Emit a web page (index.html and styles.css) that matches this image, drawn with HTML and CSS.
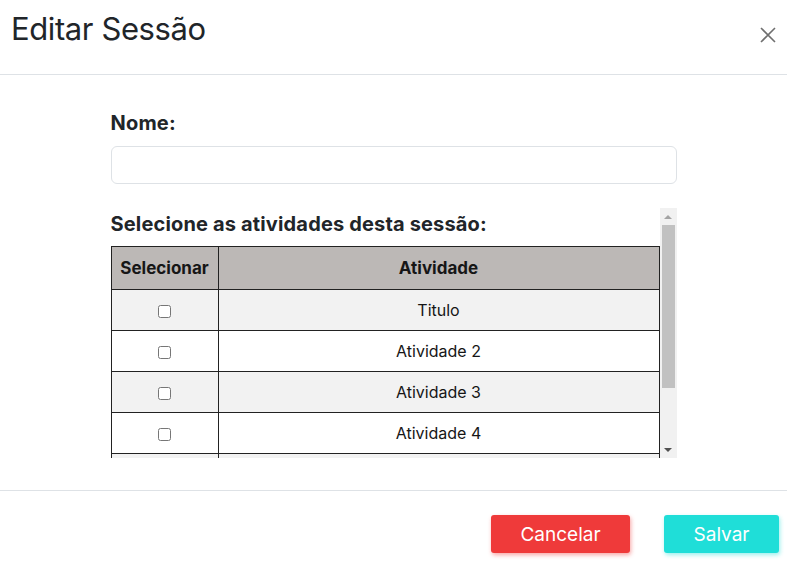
FILE: index.html
```html
<!DOCTYPE html>
<html lang="pt">
<head>
<meta charset="utf-8">
<title>Editar Sessão</title>
<link rel="stylesheet" href="styles.css">
</head>
<body>
<div class="modal">
  <header class="modal-header">
    <h1 class="modal-title">Editar Sessão</h1>
    <button class="close-btn" aria-label="Fechar">
      <svg width="18" height="18" viewBox="0 0 18 18"><path d="M2 2 L16 16 M16 2 L2 16" stroke="#6f6f6f" stroke-width="1.6" fill="none"/></svg>
    </button>
  </header>
  <main class="modal-body">
    <label class="field-label" for="nome">Nome:</label>
    <input id="nome" class="text-input" type="text">
    <div class="scroll-box">
      <div class="scroll-content">
        <h2 class="section-label">Selecione as atividades desta sessão:</h2>
        <table class="activities">
          <thead>
            <tr><th class="col-select">Selecionar</th><th>Atividade</th></tr>
          </thead>
          <tbody>
            <tr><td class="col-select"><input type="checkbox"></td><td>Titulo</td></tr>
            <tr><td class="col-select"><input type="checkbox"></td><td>Atividade 2</td></tr>
            <tr><td class="col-select"><input type="checkbox"></td><td>Atividade 3</td></tr>
            <tr><td class="col-select"><input type="checkbox"></td><td>Atividade 4</td></tr>
            <tr><td class="col-select"><input type="checkbox"></td><td>Atividade 5</td></tr>
            <tr><td class="col-select"><input type="checkbox"></td><td>Atividade 6</td></tr>
          </tbody>
        </table>
      </div>
      <div class="scrollbar" aria-hidden="true">
        <div class="sb-btn"><span class="arrow-up"></span></div>
        <div class="sb-track"><div class="sb-thumb"></div></div>
        <div class="sb-btn"><span class="arrow-down"></span></div>
      </div>
    </div>
  </main>
  <footer class="modal-footer">
    <button class="btn btn-cancel">Cancelar</button>
    <button class="btn btn-save">Salvar</button>
  </footer>
</div>
</body>
</html>
```
FILE: styles.css
```css
* { box-sizing: border-box; }
html, body {
  margin: 0;
  padding: 0;
  background: #fff;
  font-family: Inter, "Noto Sans", sans-serif;
  color: #212529;
}
.modal {
  width: 787px;
  height: 571px;
  display: flex;
  flex-direction: column;
}
.modal-header {
  height: 75px;
  border-bottom: 1px solid #dee2e6;
  display: flex;
  justify-content: space-between;
  align-items: flex-start;
  padding: 10px 10px 0 11px;
}
.modal-title {
  margin: 0;
  font-size: 31px;
  font-weight: 400;
  line-height: 38px;
  letter-spacing: -0.4px;
  color: #212529;
}
.close-btn {
  border: 0;
  background: transparent;
  padding: 0;
  margin-top: 16px;
  width: 18px;
  height: 18px;
  cursor: pointer;
}
.close-btn svg { display: block; }
.modal-body {
  flex: 1;
  width: 566px;
  margin: 0 auto;
  padding-top: 36px;
  display: flex;
  flex-direction: column;
}
.field-label {
  font-size: 20px;
  font-weight: 700;
  line-height: 24px;
  letter-spacing: 0.2px;
  color: #212529;
}
.text-input {
  margin-top: 11px;
  height: 38px;
  width: 100%;
  border: 1px solid #dee2e6;
  border-radius: 6px;
  font-family: inherit;
  font-size: 16px;
  padding: 6px 12px;
}
.scroll-box {
  margin-top: 24px;
  height: 250px;
  display: flex;
}
.scroll-content {
  flex: 1;
  min-width: 0;
  overflow: hidden;
}
.scrollbar {
  width: 17px;
  flex: none;
  background: #f1f1f1;
  display: flex;
  flex-direction: column;
}
.sb-btn {
  height: 17px;
  display: flex;
  align-items: center;
  justify-content: center;
}
.arrow-up {
  width: 0;
  height: 0;
  border-left: 4px solid transparent;
  border-right: 4px solid transparent;
  border-bottom: 4px solid #a3a3a3;
}
.arrow-down {
  width: 0;
  height: 0;
  border-left: 4px solid transparent;
  border-right: 4px solid transparent;
  border-top: 4px solid #505050;
}
.sb-track {
  flex: 1;
  padding: 0 2px;
}
.sb-thumb {
  height: 163px;
  background: #c1c1c1;
}
.section-label {
  margin: 0;
  padding-top: 4px;
  font-size: 20px;
  font-weight: 700;
  line-height: 24px;
  letter-spacing: 0.16px;
  height: 38px;
  color: #212529;
}
.activities {
  width: 100%;
  border-collapse: collapse;
  font-size: 16px;
  color: #161616;
}
.activities th,
.activities td {
  border: 1px solid #222;
  text-align: center;
  padding: 0 4px;
}
.activities th {
  background: #bcb8b6;
  font-size: 17px;
  font-weight: 700;
  height: 43px;
}
.activities td {
  height: 41px;
}
.activities .col-select { width: 107px; }
.activities tbody tr:nth-child(odd) td { background: #f2f2f2; }
.activities tbody tr:nth-child(even) td { background: #fff; }
.activities input[type="checkbox"] {
  width: 13px;
  height: 13px;
  margin: 0;
  vertical-align: middle;
}
.modal-footer {
  height: 81px;
  border-top: 1px solid #dee2e6;
  display: flex;
  justify-content: flex-end;
  align-items: flex-start;
  gap: 34px;
  padding: 24px 8px 0 0;
}
.btn {
  height: 38px;
  border: 0;
  border-radius: 3px;
  color: #fff;
  font-family: inherit;
  font-size: 19px;
  font-weight: 400;
  cursor: pointer;
}
.btn-cancel {
  width: 139px;
  background: #ef3a3a;
  box-shadow: 1px 2px 4px rgba(239, 58, 58, 0.45);
}
.btn-save {
  width: 115px;
  background: #1fded8;
  box-shadow: 1px 2px 4px rgba(31, 222, 216, 0.45);
}
```
